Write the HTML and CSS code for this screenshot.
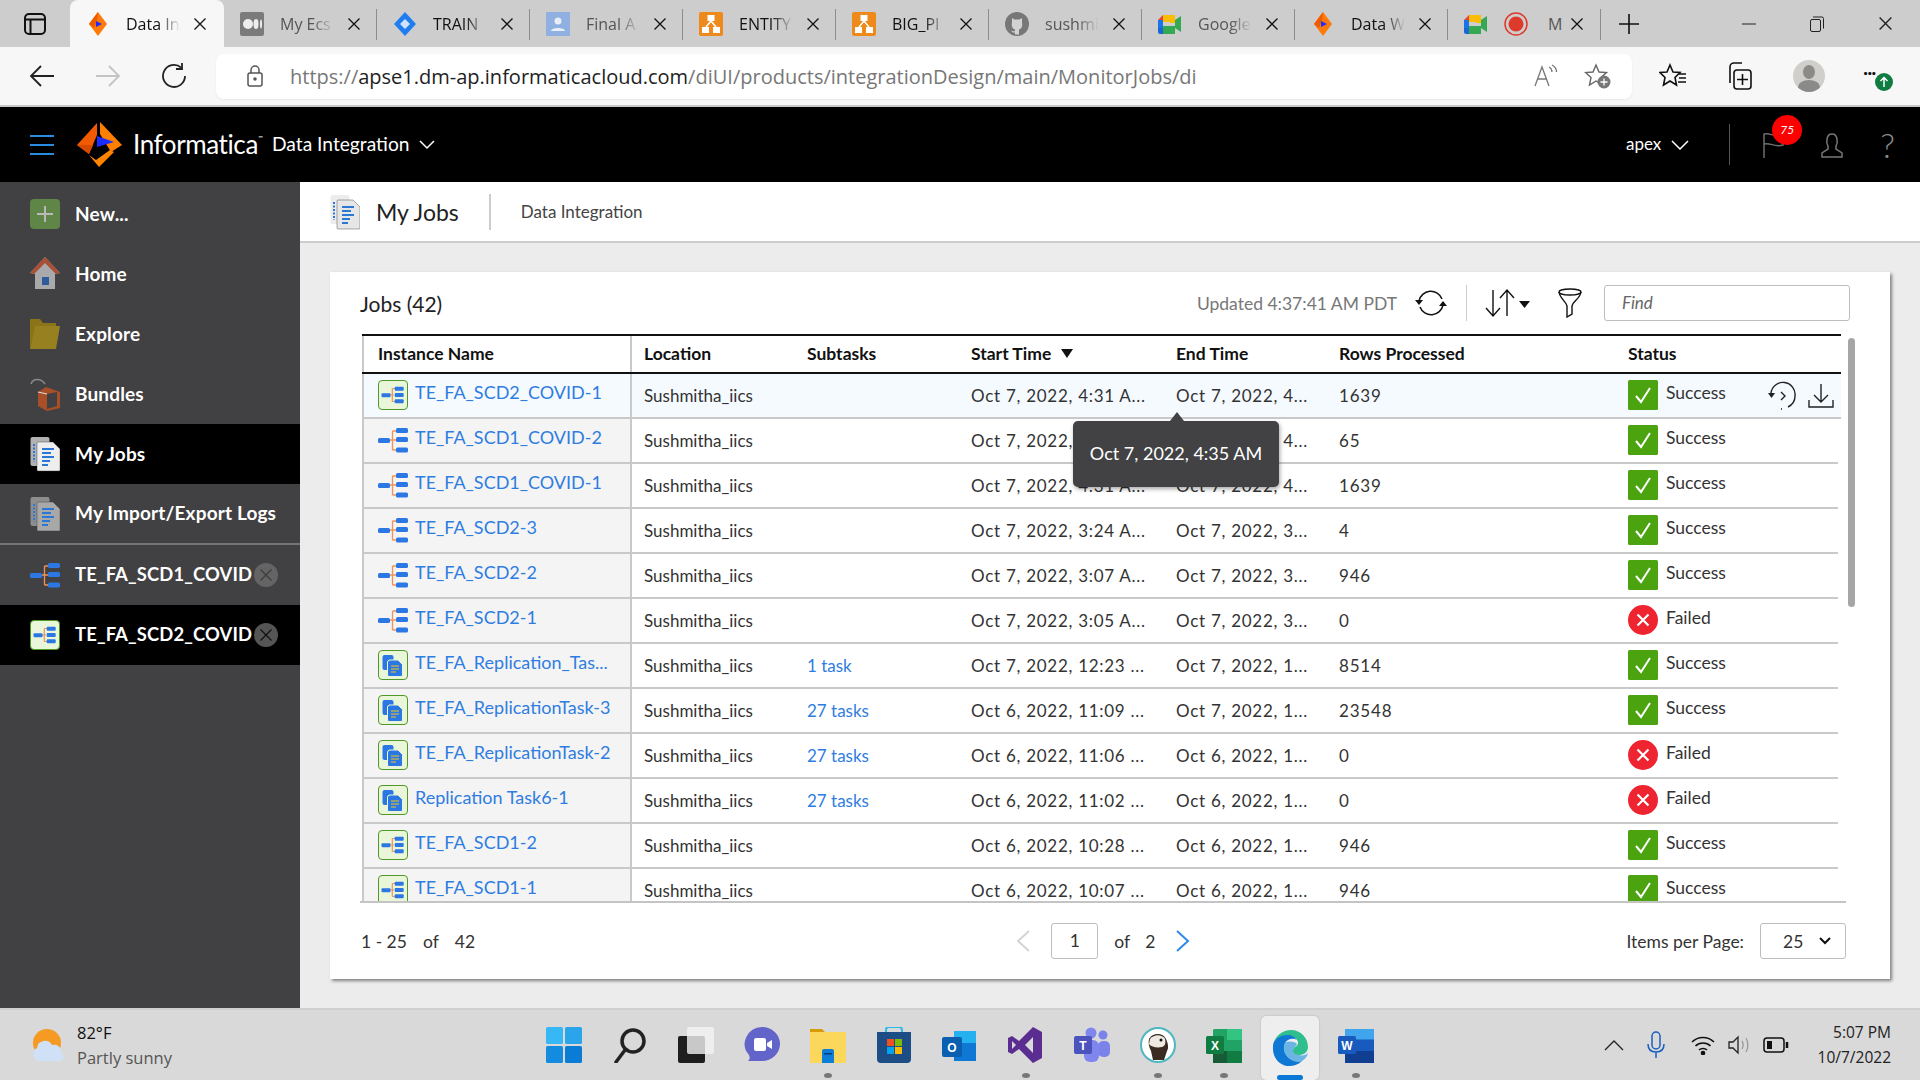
FILE: index.html
```html
<!DOCTYPE html>
<html lang="en">
<head>
    <meta charset="UTF-8">
    <meta name="viewport" content="width=device-width, initial-scale=1.0">
    <title>Data Integration - My Jobs</title>
    <link rel="stylesheet" href="styles.css">
</head>
<body>
    <svg class="defs" width="0" height="0">
        <symbol id="ic-flow" viewBox="0 0 30 30">
            <path d="M12 15h4M14.3 8.5v13M14.3 8.5h3M14.3 21.5h3" stroke="#f0915a" stroke-width="1.2" fill="none"/>
            <rect x="3.5" y="13.2" width="9" height="4" rx="1" fill="#2b78e4"/>
            <rect x="16.7" y="6.7" width="9" height="4" rx="1" fill="#2b78e4"/>
            <rect x="16.7" y="12.9" width="9" height="4" rx="1" fill="#2b78e4"/>
            <rect x="16.7" y="19.3" width="9" height="4" rx="1" fill="#2b78e4"/>
        </symbol>
        <symbol id="ic-flow-big" viewBox="0 0 30 30">
            <path d="M12 15h6M14.5 6v19M14.5 6h4M14.5 25h4" stroke="#f0915a" stroke-width="1.3" fill="none"/>
            <rect x="0" y="13" width="12" height="5" rx="1.5" fill="#2b78e4"/>
            <rect x="18" y="3" width="12" height="5" rx="1.5" fill="#2b78e4"/>
            <rect x="18" y="12" width="12" height="5" rx="1.5" fill="#2b78e4"/>
            <rect x="18" y="22.5" width="12" height="5" rx="1.5" fill="#2b78e4"/>
        </symbol>
        <symbol id="ic-repl" viewBox="0 0 30 30">
            <rect x="4.5" y="5" width="11" height="15" rx="2" fill="#2b78e4"/>
            <path d="M11 10h9l4.5 4.5v10.5a1.5 1.5 0 0 1-1.5 1.5h-12a1.5 1.5 0 0 1-1.5-1.5v-13a1.5 1.5 0 0 1 1.5-1.5z" fill="#2b78e4" stroke="#e8f5d8"/>
            <path d="M13 16h8M13 19h8M13 22h5" stroke="#f5c518" stroke-width="1.2"/>
        </symbol>
        <symbol id="ic-docs" viewBox="0 0 30 36">
            <rect x="0.5" y="1" width="19" height="29" rx="2" fill="currentColor" opacity=".75"/>
            <path d="M8 6h15l7 7v21a1 1 0 0 1-1 1h-21a1 1 0 0 1-1-1v-27a1 1 0 0 1 1-1z" fill="currentColor" stroke="#333" stroke-opacity=".4"/>
            <path d="M12 13h12M12 17h9M12 21h12M12 25h8M12 29h6" stroke="#2b78d4" stroke-width="2"/>
            <path d="M4 8v18" stroke="#2b78d4" stroke-width="2" stroke-dasharray="2 1.5"/>
        </symbol>
        <symbol id="ic-check" viewBox="0 0 30 30">
            <rect width="30" height="30" rx="1.5" fill="#4aa30f"/>
            <path d="M8 16l5 6 9-14" stroke="#fff" stroke-width="2" fill="none"/>
        </symbol>
        <symbol id="ic-fail" viewBox="0 0 30 30">
            <circle cx="15" cy="15" r="15" fill="#ee2430"/>
            <path d="M9.5 9.5l11 11M20.5 9.5l-11 11" stroke="#fff" stroke-width="2.2"/>
        </symbol>
        <symbol id="ic-logo" viewBox="0 0 45 45">
            <path d="M20 1L0 23l12 9 8-19z" fill="#f15a00"/>
            <path d="M0 23l12 9 4-9z" fill="#d84a00"/>
            <path d="M23 0l22 23-11 7-11-18z" fill="#ff7f00"/>
            <path d="M12 33l10 12 15-15-4-2-14 10z" fill="#ff8400"/>
            <path d="M20 14l17 6-17 5z" fill="#1a2cff"/>
        </symbol>
        <symbol id="ic-diamond" viewBox="0 0 24 24">
            <path d="M12 0L3 12l9 12 9-12z" fill="#ff7a0a"/>
            <path d="M12 0L3 12l5 4 3-8z" fill="#ee5a00"/>
            <path d="M10 9l6 3-6 3z" fill="#1a2cff"/>
        </symbol>
        <symbol id="ic-drawio" viewBox="0 0 24 24">
            <rect width="24" height="24" rx="2" fill="#ee8a1c"/>
            <rect x="8.5" y="3" width="7" height="6" fill="#fff"/>
            <rect x="3" y="15" width="7" height="6" fill="#fff"/>
            <rect x="14" y="15" width="7" height="6" fill="#fff"/>
            <path d="M12 9l-5 6M12 9l5 6" stroke="#fff" stroke-width="1.5"/>
        </symbol>
        <symbol id="ic-meet" viewBox="0 0 24 24">
            <path d="M5 3h12v7H5z" fill="#fbbc04"/>
            <path d="M5 3L0 8h5z" fill="#ea4335"/>
            <path d="M0 8h5v8H0z" fill="#1a73e8"/>
            <path d="M0 16h5v6H2a2 2 0 0 1-2-2z" fill="#1967d2"/>
            <path d="M5 14h12v8H5z" fill="#34a853"/>
            <path d="M17 8l6-4v16l-6-4z" fill="#34a853"/>
            <path d="M17 3v8h-5V3z" fill="#fbbc04"/>
        </symbol>
        <symbol id="ic-x" viewBox="0 0 14 14">
            <path d="M1.5 1.5l11 11M12.5 1.5l-11 11" stroke="currentColor" stroke-width="1.3"/>
        </symbol>
    </svg>

    <div class="tabbar">
        <div class="tab-menu">
            <svg width="22" height="24" viewBox="0 0 22 24" fill="none" stroke="#111" stroke-width="2"><rect x="1" y="2" width="20" height="20" rx="4"/><path d="M1 7.5h20M6.5 7.5V22"/></svg>
        </div>
        <div class="tab active">
            <svg class="fav"><use href="#ic-diamond"/></svg>
            <span class="tab-title dark">Data In</span>
            <svg class="tab-x"><use href="#ic-x"/></svg>
        </div>
        <div class="tab">
            <svg class="fav" viewBox="0 0 24 24"><rect width="24" height="24" rx="2" fill="#7b7b7b"/><circle cx="8" cy="12" r="5" fill="#eee"/><ellipse cx="16" cy="12" rx="2.5" ry="5" fill="#eee"/><ellipse cx="21" cy="12" rx="1" ry="4.5" fill="#eee"/></svg>
            <span class="tab-title">My Ecs</span>
            <svg class="tab-x"><use href="#ic-x"/></svg>
        </div>
        <div class="tab">
            <svg class="fav" viewBox="0 0 24 24"><path d="M12 0L1 12l11 12 11-12z" fill="#1f7df0"/><path d="M12 7l-5 5 5 5 5-5z" fill="#cfe3ff"/></svg>
            <span class="tab-title dark">TRAIN</span>
            <svg class="tab-x"><use href="#ic-x"/></svg>
        </div>
        <div class="tab">
            <svg class="fav" viewBox="0 0 24 24"><rect width="24" height="24" rx="1" fill="#8fb0e0"/><circle cx="12" cy="9" r="3.5" fill="#e8eef8"/><path d="M5 19c0-4 14-4 14 0z" fill="#e8eef8"/></svg>
            <span class="tab-title">Final A</span>
            <svg class="tab-x"><use href="#ic-x"/></svg>
        </div>
        <div class="tab">
            <svg class="fav"><use href="#ic-drawio"/></svg>
            <span class="tab-title dark">ENTITY</span>
            <svg class="tab-x"><use href="#ic-x"/></svg>
        </div>
        <div class="tab">
            <svg class="fav"><use href="#ic-drawio"/></svg>
            <span class="tab-title dark">BIG_PI</span>
            <svg class="tab-x"><use href="#ic-x"/></svg>
        </div>
        <div class="tab">
            <svg class="fav" viewBox="0 0 24 24"><circle cx="12" cy="12" r="12" fill="#777"/><path d="M7 6l2.5 1.5h5L17 6v5c1 3-1 6-3 6.5v5h-4v-2c-2 .5-3-.5-4-2 1 .5 2 1 4 .5v-1.5c-2-.5-4-3.5-3-6.5z" fill="#d2d2d2"/></svg>
            <span class="tab-title">sushmi</span>
            <svg class="tab-x"><use href="#ic-x"/></svg>
        </div>
        <div class="tab">
            <svg class="fav"><use href="#ic-meet"/></svg>
            <span class="tab-title">Google</span>
            <svg class="tab-x"><use href="#ic-x"/></svg>
        </div>
        <div class="tab">
            <svg class="fav"><use href="#ic-diamond"/></svg>
            <span class="tab-title dark">Data W</span>
            <svg class="tab-x"><use href="#ic-x"/></svg>
        </div>
        <div class="tab last">
            <svg class="fav"><use href="#ic-meet"/></svg>
            <svg class="fav rec" viewBox="0 0 24 24"><circle cx="12" cy="12" r="11" fill="none" stroke="#dd3a2c" stroke-width="1.5"/><circle cx="12" cy="12" r="7.5" fill="#dd3a2c"/></svg>
            <span class="tab-title short">M</span>
            <svg class="tab-x"><use href="#ic-x"/></svg>
        </div>
        <div class="tab-new">
            <svg width="22" height="22" viewBox="0 0 22 22" stroke="#111" stroke-width="1.6"><path d="M11 1v20M1 11h20"/></svg>
        </div>
        <div class="win-btns">
            <svg width="14" height="14" viewBox="0 0 14 14" stroke="#222"><path d="M0 7h14"/></svg>
            <svg width="16" height="16" viewBox="0 0 16 16" fill="none" stroke="#222"><rect x="1.5" y="3.5" width="10" height="12" rx="1.5"/><path d="M4 1h9a1.5 1.5 0 0 1 1.5 1.5v10"/></svg>
            <svg width="15" height="15" class="win-x"><use href="#ic-x"/></svg>
        </div>
    </div>

    <div class="toolbar">
        <div class="nav-btns">
            <svg width="26" height="24" viewBox="0 0 26 24" fill="none" stroke="#222" stroke-width="1.8"><path d="M25 12H2M12 2L2 12l10 10"/></svg>
            <svg width="26" height="24" viewBox="0 0 26 24" fill="none" stroke="#c4c4c4" stroke-width="1.8"><path d="M1 12h23M14 2l10 10-10 10"/></svg>
            <svg width="26" height="26" viewBox="0 0 26 26" fill="none" stroke="#222" stroke-width="1.8"><path d="M20 4.5A11 11 0 1 0 24 13M21 0v6h-6"/></svg>
        </div>
        <div class="urlbar">
            <svg class="lock" width="16" height="22" viewBox="0 0 16 22" fill="none" stroke="#555" stroke-width="1.5"><rect x="1" y="8" width="14" height="13" rx="2"/><path d="M4 8V5a4 4 0 0 1 8 0v3"/><circle cx="8" cy="14" r="1" fill="#555"/></svg>
            <div class="url"><span class="url-dim">https://</span>apse1.dm-ap.informaticacloud.com<span class="url-dim">/diUI/products/integrationDesign/main/MonitorJobs/di</span></div>
            <svg width="24" height="24" viewBox="0 0 24 24" fill="none" stroke="#777" stroke-width="1.3"><path d="M1 22L8 3l7 19M3.5 15h9M15 3c2 1 3 3 3 5M18 1c3 1.5 4.5 4 4.5 7"/></svg>
            <svg class="star-add" width="28" height="28" viewBox="0 0 28 28" fill="none" stroke="#666" stroke-width="1.4"><path d="M12 3l3 7 7.5.5-5.5 5 1.5 7.5L12 19l-6.5 4L7 15.5l-5.5-5L9 10z"/><circle cx="20" cy="20" r="6.5" fill="#777" stroke="none"/><path d="M20 16.5v7M16.5 20h7" stroke="#fff" stroke-width="1.3"/></svg>
        </div>
        <div class="tool-btns">
            <svg width="28" height="26" viewBox="0 0 28 26" fill="none" stroke="#111" stroke-width="1.6"><path d="M11 2l3 7 7 .5-5 5 1.5 7.5L11 18l-6.5 4L6 14.5l-5-5L8 9zM20 11h7M20 15h7M19 19h8"/></svg>
            <svg width="28" height="30" viewBox="0 0 28 30" fill="none" stroke="#111" stroke-width="1.6"><rect x="9" y="9" width="17" height="19" rx="3"/><path d="M17.5 13v11M12 18.5h11M5 22V6a4 4 0 0 1 4-4h8"/></svg>
            <div class="avatar"><span class="avatar-head"></span><span class="avatar-body"></span></div>
            <div class="more">
                <span class="more-dots">&middot;&middot;&middot;</span>
                <svg width="18" height="18" viewBox="0 0 18 18"><circle cx="9" cy="9" r="9" fill="#107c41"/><path d="M9 14V5M5.5 8L9 4.5 12.5 8" stroke="#fff" stroke-width="1.5" fill="none"/></svg>
            </div>
        </div>
    </div>

    <header class="appbar">
        <div class="hamburger"><span></span><span></span><span></span></div>
        <svg class="logo"><use href="#ic-logo"/></svg>
        <span class="brand">Informatica<sup>™</sup></span>
        <span class="product">Data Integration</span>
        <svg class="chev" width="16" height="10" viewBox="0 0 16 10" fill="none" stroke="#fff" stroke-width="1.5"><path d="M1 1l7 7 7-7"/></svg>
        <div class="appbar-right">
            <span class="org">apex</span>
            <svg class="chev" width="18" height="10" viewBox="0 0 18 10" fill="none" stroke="#fff" stroke-width="1.5"><path d="M1 1l8 8 8-8"/></svg>
            <span class="appbar-div"></span>
            <div class="flag">
                <svg width="22" height="26" viewBox="0 0 22 26" fill="none" stroke="#6d6d6d" stroke-width="1.5"><path d="M2 26V2c6-2 10 4 19 1v10c-8 3-13-3-19-1"/></svg>
                <span class="badge">75</span>
            </div>
            <svg width="22" height="26" viewBox="0 0 22 26" fill="none" stroke="#777" stroke-width="1.5"><path d="M7 14c-2-3-2-12 4-12s6 9 4 12v3l6 4v4H1v-4l6-4z"/></svg>
            <span class="help">?</span>
        </div>
    </header>

    <div class="body-row">
        <nav class="sidebar">
            <a class="nav-item">
                <svg class="nav-ic" viewBox="0 0 30 36"><rect y="3" width="30" height="30" rx="4" fill="#5f8547"/><path d="M15 10v16M7 18h16" stroke="#b9b9b9" stroke-width="2"/></svg>
                <span class="nav-label">New...</span>
            </a>
            <a class="nav-item">
                <svg class="nav-ic" viewBox="0 0 30 36"><path d="M15 1L0 17l5 1v15h20V18l5-1z" fill="#a9a9ab"/><path d="M15 1L0 17l4 1L15 7l11 11 4-1z" fill="#a84f35"/><rect x="12" y="21" width="7" height="8" fill="#2f5d9c"/></svg>
                <span class="nav-label">Home</span>
            </a>
            <a class="nav-item">
                <svg class="nav-ic" viewBox="0 0 30 36"><path d="M0 33V4a1 1 0 0 1 1-1h9l3 4h13v5H6z" fill="#8a7318"/><path d="M0 33L5 10h25l-4 23z" fill="#96801f"/></svg>
                <span class="nav-label">Explore</span>
            </a>
            <a class="nav-item">
                <svg class="nav-ic" viewBox="0 0 30 36"><path d="M1 8c2-6 10-6 14 0" fill="none" stroke="#8a8a8a" stroke-width="1.5"/><path d="M8 16l8-5 14 5v16l-13 3-9-5z" fill="#a84f28"/><path d="M17 18l10-2v14l-10 3z" fill="#414042"/><path d="M8 16l9 2" stroke="#ddd"/></svg>
                <span class="nav-label">Bundles</span>
            </a>
            <a class="nav-item current">
                <svg class="nav-ic doc-light"><use href="#ic-docs"/></svg>
                <span class="nav-label">My Jobs</span>
            </a>
            <a class="nav-item sep">
                <svg class="nav-ic doc-muted"><use href="#ic-docs"/></svg>
                <span class="nav-label">My Import/Export Logs</span>
            </a>
            <a class="nav-item">
                <svg class="nav-ic"><use href="#ic-flow-big"/></svg>
                <span class="nav-label open-label">TE_FA_SCD1_COVID</span>
                <span class="nav-close dim"><svg width="14" height="14"><use href="#ic-x"/></svg></span>
            </a>
            <a class="nav-item current">
                <span class="flow-box side"><svg width="30" height="30"><use href="#ic-flow"/></svg></span>
                <span class="nav-label open-label">TE_FA_SCD2_COVID</span>
                <span class="nav-close"><svg width="14" height="14"><use href="#ic-x"/></svg></span>
            </a>
        </nav>

        <main class="content">
            <div class="page-head">
                <svg class="page-ic doc-page"><use href="#ic-docs"/></svg>
                <span class="page-title">My Jobs</span>
                <span class="page-div"></span>
                <span class="page-sub">Data Integration</span>
            </div>

            <section class="card">
                <div class="card-top">
                    <span class="card-title">Jobs (42)</span>
                    <span class="updated">Updated 4:37:41 AM PDT</span>
                    <svg class="refresh" width="32" height="26" viewBox="0 0 32 26" fill="none" stroke="#111" stroke-width="1.5"><path d="M4 11a12 12 0 0 1 23-2M28 15a12 12 0 0 1-23 2"/><path d="M0 10h8l-4 5zM24 16h8l-4-5z" fill="#111" stroke="none"/></svg>
                    <span class="top-div"></span>
                    <svg class="sort" width="46" height="30" viewBox="0 0 46 30" fill="none" stroke="#111" stroke-width="1.4"><path d="M8 2v26M1 20l7 8 7-8M22 28V2M15 10l7-8 7 8"/><path d="M34 13h11l-5.5 7z" fill="#111" stroke="none"/></svg>
                    <svg class="funnel" width="24" height="30" viewBox="0 0 24 30" fill="none" stroke="#111" stroke-width="1.4"><ellipse cx="12" cy="4" rx="11" ry="3"/><path d="M1 4c1 7 7 9 8 14v11l5-3v-8c1-5 8-7 9-14"/></svg>
                    <div class="find">Find</div>
                </div>

                <div class="grid-wrap">
                    <div class="grid-scroll">
                        <div class="grid-row grid-head">
                            <div class="cell name-head">Instance Name</div>
                            <div class="cell">Location</div>
                            <div class="cell">Subtasks</div>
                            <div class="cell">Start Time <span class="sort-down"></span></div>
                            <div class="cell">End Time</div>
                            <div class="cell">Rows Processed</div>
                            <div class="cell">Status</div>
                        </div>

                        <div class="grid-row hover">
                            <div class="cell name"><span class="flow-box"><svg width="30" height="30"><use href="#ic-flow"/></svg></span><a>TE_FA_SCD2_COVID-1</a></div>
                            <div class="cell">Sushmitha_iics</div>
                            <div class="cell"></div>
                            <div class="cell">Oct 7, 2022, 4:31 A...</div>
                            <div class="cell">Oct 7, 2022, 4...</div>
                            <div class="cell">1639</div>
                            <div class="cell status">
                                <svg class="st"><use href="#ic-check"/></svg><span>Success</span>
                                <div class="row-actions">
                                    <svg width="30" height="30" viewBox="0 0 30 30" fill="none" stroke="#222" stroke-width="1.4"><path d="M3 12A12 12 0 0 1 27 15c0 5-3 9-7 11M14 28h-1"/><path d="M0 12h7l-3.5 5z" fill="#222" stroke="none"/><path d="M13 11l4 4-4 4"/></svg>
                                    <svg width="26" height="26" viewBox="0 0 26 26" fill="none" stroke="#222" stroke-width="1.4"><path d="M13 1v18M6 12l7 7 7-7M1 17v7h24v-7"/></svg>
                                </div>
                            </div>
                        </div>
                        <div class="grid-row">
                            <div class="cell name"><svg class="flow-plain"><use href="#ic-flow-big"/></svg><a>TE_FA_SCD1_COVID-2</a></div>
                            <div class="cell">Sushmitha_iics</div>
                            <div class="cell"></div>
                            <div class="cell">Oct 7, 2022, 4:35 A...</div>
                            <div class="cell">Oct 7, 2022, 4...</div>
                            <div class="cell">65</div>
                            <div class="cell status"><svg class="st"><use href="#ic-check"/></svg><span>Success</span></div>
                        </div>
                        <div class="grid-row">
                            <div class="cell name"><svg class="flow-plain"><use href="#ic-flow-big"/></svg><a>TE_FA_SCD1_COVID-1</a></div>
                            <div class="cell">Sushmitha_iics</div>
                            <div class="cell"></div>
                            <div class="cell">Oct 7, 2022, 4:31 A...</div>
                            <div class="cell">Oct 7, 2022, 4...</div>
                            <div class="cell">1639</div>
                            <div class="cell status"><svg class="st"><use href="#ic-check"/></svg><span>Success</span></div>
                        </div>
                        <div class="grid-row">
                            <div class="cell name"><svg class="flow-plain"><use href="#ic-flow-big"/></svg><a>TE_FA_SCD2-3</a></div>
                            <div class="cell">Sushmitha_iics</div>
                            <div class="cell"></div>
                            <div class="cell">Oct 7, 2022, 3:24 A...</div>
                            <div class="cell">Oct 7, 2022, 3...</div>
                            <div class="cell">4</div>
                            <div class="cell status"><svg class="st"><use href="#ic-check"/></svg><span>Success</span></div>
                        </div>
                        <div class="grid-row">
                            <div class="cell name"><svg class="flow-plain"><use href="#ic-flow-big"/></svg><a>TE_FA_SCD2-2</a></div>
                            <div class="cell">Sushmitha_iics</div>
                            <div class="cell"></div>
                            <div class="cell">Oct 7, 2022, 3:07 A...</div>
                            <div class="cell">Oct 7, 2022, 3...</div>
                            <div class="cell">946</div>
                            <div class="cell status"><svg class="st"><use href="#ic-check"/></svg><span>Success</span></div>
                        </div>
                        <div class="grid-row">
                            <div class="cell name"><svg class="flow-plain"><use href="#ic-flow-big"/></svg><a>TE_FA_SCD2-1</a></div>
                            <div class="cell">Sushmitha_iics</div>
                            <div class="cell"></div>
                            <div class="cell">Oct 7, 2022, 3:05 A...</div>
                            <div class="cell">Oct 7, 2022, 3...</div>
                            <div class="cell">0</div>
                            <div class="cell status"><svg class="st"><use href="#ic-fail"/></svg><span>Failed</span></div>
                        </div>
                        <div class="grid-row">
                            <div class="cell name"><span class="flow-box"><svg width="30" height="30"><use href="#ic-repl"/></svg></span><a>TE_FA_Replication_Tas...</a></div>
                            <div class="cell">Sushmitha_iics</div>
                            <div class="cell"><a>1 task</a></div>
                            <div class="cell">Oct 7, 2022, 12:23 ...</div>
                            <div class="cell">Oct 7, 2022, 1...</div>
                            <div class="cell">8514</div>
                            <div class="cell status"><svg class="st"><use href="#ic-check"/></svg><span>Success</span></div>
                        </div>
                        <div class="grid-row">
                            <div class="cell name"><span class="flow-box"><svg width="30" height="30"><use href="#ic-repl"/></svg></span><a>TE_FA_ReplicationTask-3</a></div>
                            <div class="cell">Sushmitha_iics</div>
                            <div class="cell"><a>27 tasks</a></div>
                            <div class="cell">Oct 6, 2022, 11:09 ...</div>
                            <div class="cell">Oct 7, 2022, 1...</div>
                            <div class="cell">23548</div>
                            <div class="cell status"><svg class="st"><use href="#ic-check"/></svg><span>Success</span></div>
                        </div>
                        <div class="grid-row">
                            <div class="cell name"><span class="flow-box"><svg width="30" height="30"><use href="#ic-repl"/></svg></span><a>TE_FA_ReplicationTask-2</a></div>
                            <div class="cell">Sushmitha_iics</div>
                            <div class="cell"><a>27 tasks</a></div>
                            <div class="cell">Oct 6, 2022, 11:06 ...</div>
                            <div class="cell">Oct 6, 2022, 1...</div>
                            <div class="cell">0</div>
                            <div class="cell status"><svg class="st"><use href="#ic-fail"/></svg><span>Failed</span></div>
                        </div>
                        <div class="grid-row">
                            <div class="cell name"><span class="flow-box"><svg width="30" height="30"><use href="#ic-repl"/></svg></span><a>Replication Task6-1</a></div>
                            <div class="cell">Sushmitha_iics</div>
                            <div class="cell"><a>27 tasks</a></div>
                            <div class="cell">Oct 6, 2022, 11:02 ...</div>
                            <div class="cell">Oct 6, 2022, 1...</div>
                            <div class="cell">0</div>
                            <div class="cell status"><svg class="st"><use href="#ic-fail"/></svg><span>Failed</span></div>
                        </div>
                        <div class="grid-row">
                            <div class="cell name"><span class="flow-box"><svg width="30" height="30"><use href="#ic-flow"/></svg></span><a>TE_FA_SCD1-2</a></div>
                            <div class="cell">Sushmitha_iics</div>
                            <div class="cell"></div>
                            <div class="cell">Oct 6, 2022, 10:28 ...</div>
                            <div class="cell">Oct 6, 2022, 1...</div>
                            <div class="cell">946</div>
                            <div class="cell status"><svg class="st"><use href="#ic-check"/></svg><span>Success</span></div>
                        </div>
                        <div class="grid-row">
                            <div class="cell name"><span class="flow-box"><svg width="30" height="30"><use href="#ic-flow"/></svg></span><a>TE_FA_SCD1-1</a></div>
                            <div class="cell">Sushmitha_iics</div>
                            <div class="cell"></div>
                            <div class="cell">Oct 6, 2022, 10:07 ...</div>
                            <div class="cell">Oct 6, 2022, 1...</div>
                            <div class="cell">946</div>
                            <div class="cell status"><svg class="st"><use href="#ic-check"/></svg><span>Success</span></div>
                        </div>
                    </div>

                    <div class="scrollbar"></div>
                    <div class="tooltip">Oct 7, 2022, 4:35 AM</div>
                </div>

                <div class="card-foot">
                    <div class="range"><span>1 - 25</span><span>of</span><span>42</span></div>
                    <div class="pager">
                        <svg width="16" height="24" viewBox="0 0 16 24" fill="none" stroke="#d4d4d4" stroke-width="2"><path d="M14 2L3 12l11 10"/></svg>
                        <div class="page-input">1</div>
                        <span>of</span>
                        <span>2</span>
                        <svg width="16" height="24" viewBox="0 0 16 24" fill="none" stroke="#2e8be8" stroke-width="2"><path d="M2 2l11 10L2 22"/></svg>
                    </div>
                    <div class="per-page">
                        <span>Items per Page:</span>
                        <div class="page-size">25
                            <svg width="12" height="8" viewBox="0 0 12 8" fill="none" stroke="#111" stroke-width="2"><path d="M1 1l5 5 5-5"/></svg>
                        </div>
                    </div>
                </div>
            </section>
        </main>
    </div>

    <footer class="taskbar">
        <div class="weather">
            <svg width="36" height="36" viewBox="0 0 36 36"><circle cx="17" cy="16" r="14" fill="#f59a23"/><path d="M9 34a7 7 0 0 1-2-13 8 8 0 0 1 15-3 7 7 0 0 1 9 8 4.5 4.5 0 0 1 0 8z" fill="#cfe0f7"/></svg>
            <div class="weather-text"><span class="temp">82°F</span><span class="cond">Partly sunny</span></div>
        </div>
        <div class="task-icons">
            <div class="task-ic">
                <svg width="36" height="36" viewBox="0 0 36 36"><rect width="17" height="17" rx="1.5" fill="#35b8f5"/><rect x="19" width="17" height="17" rx="1.5" fill="#2aa5ec"/><rect y="19" width="17" height="17" rx="1.5" fill="#138ce0"/><rect x="19" y="19" width="17" height="17" rx="1.5" fill="#0a7cd6"/></svg>
            </div>
            <div class="task-ic">
                <svg width="36" height="36" viewBox="0 0 36 36" fill="none" stroke="#222" stroke-width="3.5"><circle cx="21" cy="14" r="11"/><path d="M13 23L4 35" stroke-linecap="round"/></svg>
            </div>
            <div class="task-ic">
                <svg width="36" height="36" viewBox="0 0 36 36"><rect y="9" width="27" height="27" rx="2" fill="#1e1e1e"/><rect x="9" width="27" height="27" rx="2" fill="#f2f2f2" opacity=".8"/></svg>
            </div>
            <div class="task-ic">
                <svg width="36" height="36" viewBox="0 0 36 36"><path d="M18 0a18 17 0 0 1 0 34H4c2-2 2-4 1-6A18 17 0 0 1 18 0z" fill="#6264c9"/><rect x="10" y="11" width="12" height="13" rx="2" fill="#fff"/><path d="M23 16l5-3v9l-5-3z" fill="#fff"/></svg>
            </div>
            <div class="task-ic dot">
                <svg width="36" height="36" viewBox="0 0 36 36"><path d="M0 2h12l3 3h21v8H0z" fill="#d79b08"/><rect y="5" width="36" height="31" fill="#fbd75b"/><path d="M12 24a2 2 0 0 1 2-2h8a2 2 0 0 1 2 2v12H12z" fill="#0c7ed8"/><rect x="14" y="26" width="8" height="1.5" fill="#063d7a"/></svg>
            </div>
            <div class="task-ic">
                <svg width="36" height="36" viewBox="0 0 36 36"><path d="M10 6V3a3 3 0 0 1 3-3h10a3 3 0 0 1 3 3v3" fill="none" stroke="#2ebae8" stroke-width="2"/><path d="M1 5h34v27a4 4 0 0 1-4 4H5a4 4 0 0 1-4-4z" fill="#1c4d85"/><rect x="11" y="12" width="7" height="7" fill="#f25022"/><rect x="19" y="12" width="7" height="7" fill="#7fba00"/><rect x="11" y="20" width="7" height="7" fill="#00a4ef"/><rect x="19" y="20" width="7" height="7" fill="#ffb900"/></svg>
            </div>
            <div class="task-ic">
                <svg width="36" height="36" viewBox="0 0 36 36"><path d="M12 4h22v12H12z" fill="#25b0ef"/><path d="M12 16h22v18H12z" fill="#0f78d4"/><rect y="10" width="20" height="20" rx="2" fill="#0a5fb0"/><text x="10" y="25" class="ic-letter" text-anchor="middle">O</text></svg>
            </div>
            <div class="task-ic dot">
                <svg width="36" height="36" viewBox="0 0 36 36"><path d="M25 0l9 5v26l-9 5-14-14-7 5-4-2V11l4-2 7 5zM25 10l-8 8 8 8zM4 14v8l4-4z" fill="#5c2d91" fill-rule="evenodd"/></svg>
            </div>
            <div class="task-ic">
                <svg width="36" height="36" viewBox="0 0 36 36"><circle cx="29" cy="8" r="4.5" fill="#7b83eb"/><rect x="24" y="14" width="12" height="16" rx="5" fill="#7b83eb"/><circle cx="17" cy="6" r="5.5" fill="#7f87ee"/><rect x="10" y="13" width="15" height="22" rx="6" fill="#7f87ee"/><rect y="9" width="18" height="18" rx="2" fill="#4b53bc"/><text x="9" y="23" class="ic-letter" text-anchor="middle">T</text></svg>
            </div>
            <div class="task-ic dot">
                <svg width="36" height="36" viewBox="0 0 36 36"><circle cx="18" cy="18" r="17" fill="#fff" stroke="#4fb7c0" stroke-width="2"/><path d="M9 12c3-6 14-7 17 0 2 4 3 9 1 12l-3 9H13l-2-9c-2-4-3-8-2-12z" fill="#3a2a22"/><path d="M10 12c4-5 12-5 15 0 1 4 0 7-3 8-5 1-11 0-13-3z" fill="#efe9e2"/><circle cx="21" cy="13" r="1.5" fill="#111"/></svg>
            </div>
            <div class="task-ic dot">
                <svg width="36" height="36" viewBox="0 0 36 36"><rect x="7" y="2" width="29" height="34" rx="1.5" fill="#21a366"/><rect x="21" y="2" width="15" height="11" fill="#33c481"/><rect x="21" y="24" width="15" height="12" fill="#107c41"/><rect x="7" y="24" width="14" height="12" fill="#185c37"/><rect y="9" width="18" height="18" rx="1.5" fill="#107c41"/><text x="9" y="23" class="ic-letter" text-anchor="middle">X</text></svg>
            </div>
            <div class="task-ic running">
                <svg width="38" height="38" viewBox="0 0 38 38"><path d="M2 17C4 6 12 1 20 1c10 0 17 8 17 17 0 5-4 8-9 8-3 0-6-1-6-4 0-5 5-4 5-8 0-4-4-7-9-7-8 0-16 4-16 10z" fill="#2fbf8f"/><path d="M2 17c0-7 8-11 14-11 5 0 8 2 10 5-3-2-9-2-12 3-3 6 0 15 9 18 3 1 6 1 8 0-4 4-9 5-13 5C9 37 1 29 2 17z" fill="#0f78d4"/><path d="M14 14c-3 6 0 15 9 18 3 1 6 1 8 0 3-2 5-4 6-8-2 2-5 3-9 2-3 0-6-1-6-4 0-4 3-4 4-7-3-3-9-3-12-1z" fill="#1490df" opacity=".6"/></svg>
            </div>
            <div class="task-ic dot">
                <svg width="36" height="36" viewBox="0 0 36 36"><rect x="7" y="2" width="29" height="34" rx="1.5" fill="#2b7cd3"/><rect x="7" y="2" width="29" height="10" fill="#41a5ee"/><rect x="7" y="24" width="29" height="12" fill="#103f91"/><rect x="7" y="13" width="29" height="11" fill="#185abd"/><rect y="9" width="18" height="18" rx="1.5" fill="#185abd"/><text x="9" y="23" class="ic-letter" text-anchor="middle">W</text></svg>
            </div>
        </div>
        <div class="tray">
            <svg width="20" height="12" viewBox="0 0 20 12" fill="none" stroke="#222" stroke-width="1.3"><path d="M1 11l9-9 9 9"/></svg>
            <svg class="mic" width="18" height="28" viewBox="0 0 18 28" fill="none" stroke="#1a5fc0" stroke-width="1.5"><rect x="5" y="1" width="8" height="17" rx="4"/><path d="M1 13c0 5 3 8 8 8s8-3 8-8M9 21v6"/></svg>
            <svg class="wifi" width="24" height="20" viewBox="0 0 24 20" fill="none" stroke="#111" stroke-width="1.6"><path d="M1 7c6-6 16-6 22 0M4.5 11c4-4 11-4 15 0M8 15c2-2 6-2 8 0"/><circle cx="12" cy="18" r="1.5" fill="#111"/></svg>
            <svg class="vol" width="24" height="20" viewBox="0 0 24 20" fill="none" stroke="#222" stroke-width="1.3"><path d="M2 7h4l5-5v16l-5-5H2z"/><path d="M15 6c1.5 2 1.5 6 0 8M19 3c2.5 4 2.5 10 0 14" stroke="#999"/></svg>
            <svg class="batt" width="26" height="16" viewBox="0 0 26 16" fill="none" stroke="#111" stroke-width="1.5"><rect x="1" y="1" width="20" height="14" rx="3"/><rect x="4" y="4" width="5" height="8" fill="#111" stroke="none"/><path d="M24 5v6" stroke-width="2.5"/></svg>
            <div class="clock"><span>5:07 PM</span><span>10/7/2022</span></div>
        </div>
    </footer>
</body>
</html>
```

FILE: styles.css
```css
* {
    margin: 0;
    padding: 0;
    box-sizing: border-box;
}

html, body {
    width: 1920px;
    height: 1080px;
    overflow: hidden;
}

body {
    display: flex;
    flex-direction: column;
    font-family: "Lato", "Liberation Sans", sans-serif;
    color: #222;
    background: #ececec;
}

.defs {
    position: absolute;
}

/* browser chrome */
.tabbar {
    height: 47px;
    background: #cdcdcd;
    display: flex;
    align-items: stretch;
    font-family: "Open Sans", "Liberation Sans", sans-serif;
    font-size: 16px;
    flex-shrink: 0;
}

.tab-menu {
    width: 70px;
    display: flex;
    align-items: center;
    justify-content: center;
}

.tab {
    width: 153px;
    display: flex;
    align-items: center;
    padding-left: 16px;
    position: relative;
    border-right: 1px solid #8d8d8d;
    border-image: linear-gradient(transparent 10px, #8d8d8d 10px, #8d8d8d 39px, transparent 39px) 1;
}

.tab.active {
    width: 154px;
    background: #f7f7f7;
    border: none;
    border-radius: 8px 8px 0 0;
}

.fav {
    width: 24px;
    height: 24px;
    flex-shrink: 0;
}

.rec {
    margin-left: 16px;
}

.tab-title {
    margin-left: 16px;
    width: 54px;
    white-space: nowrap;
    overflow: hidden;
    color: #555;
    -webkit-mask-image: linear-gradient(90deg, #000 60%, transparent 100%);
    mask-image: linear-gradient(90deg, #000 60%, transparent 100%);
}

.tab-title.dark {
    color: #111;
}

.tab-title.short {
    width: 16px;
    -webkit-mask-image: none;
    mask-image: none;
    margin-left: 20px;
}

.tab-x {
    width: 14px;
    height: 14px;
    color: #111;
    margin-left: 13px;
}

.last .tab-x {
    margin-left: 6px;
}

.tab-new {
    width: 56px;
    display: flex;
    align-items: center;
    justify-content: center;
}

.win-btns {
    flex: 1;
    display: flex;
    align-items: center;
    justify-content: flex-end;
    gap: 53px;
    padding-right: 27px;
}

.win-x {
    color: #222;
}

.toolbar {
    height: 60px;
    background: #f7f7f7;
    border-bottom: 2px solid #c8c8c8;
    display: flex;
    align-items: center;
    font-family: "Open Sans", "Liberation Sans", sans-serif;
    flex-shrink: 0;
}

.nav-btns {
    width: 216px;
    display: flex;
    align-items: center;
    gap: 40px;
    padding-left: 29px;
}

.urlbar {
    width: 1416px;
    height: 45px;
    background: #fff;
    border-radius: 8px;
    box-shadow: 0 1px 2px rgba(0, 0, 0, 0.06);
    display: flex;
    align-items: center;
    padding: 0 20px 0 31px;
}

.lock {
    margin-right: 27px;
}

.url {
    flex: 1;
    font-size: 20px;
    color: #222;
    white-space: nowrap;
}

.url-dim {
    color: #777;
}

.star-add {
    margin-left: 26px;
}

.tool-btns {
    flex: 1;
    display: flex;
    align-items: center;
    padding-left: 27px;
    gap: 38px;
}

.avatar {
    width: 32px;
    height: 32px;
    border-radius: 50%;
    background: #d0cfcb;
    position: relative;
    overflow: hidden;
    flex-shrink: 0;
    margin-left: 2px;
}

.avatar-head {
    position: absolute;
    left: 10px;
    top: 5px;
    width: 12px;
    height: 14px;
    border-radius: 50%;
    background: #8a8a88;
}

.avatar-body {
    position: absolute;
    left: 5px;
    top: 20px;
    width: 22px;
    height: 14px;
    border-radius: 50%;
    background: #8a8a88;
}

.more {
    position: relative;
    width: 26px;
    height: 26px;
}

.more-dots {
    font-size: 18px;
    font-weight: 700;
    color: #111;
    line-height: 20px;
    letter-spacing: -1px;
}

.more svg {
    position: absolute;
    right: -4px;
    bottom: -2px;
}

/* app header */
.appbar {
    height: 75px;
    background: #000;
    display: flex;
    align-items: center;
    color: #fff;
    padding-left: 30px;
    flex-shrink: 0;
}

.hamburger {
    width: 24px;
    display: flex;
    flex-direction: column;
    gap: 7px;
    margin-right: 23px;
}

.hamburger span {
    height: 2px;
    background: #2a8ce0;
}

.logo {
    width: 45px;
    height: 45px;
    margin-right: 11px;
}

.brand {
    font-size: 26px;
    font-weight: 400;
    margin-right: 11px;
    width: 128px;
    white-space: nowrap;
    padding-bottom: 1px;
    letter-spacing: -0.4px;
}

.brand sup {
    font-size: 6px;
    vertical-align: 14px;
}

.product {
    font-size: 19.2px;
    margin-right: 10px;
    white-space: nowrap;
    padding-bottom: 3px;
}

.appbar-right {
    margin-left: auto;
    display: flex;
    align-items: center;
    padding-right: 25px;
}

.org {
    font-size: 17px;
    margin-right: 10px;
    padding-bottom: 2px;
}

.appbar-div {
    width: 1px;
    height: 41px;
    background: #555;
    margin: 0 32px 0 40px;
}

.flag {
    position: relative;
    width: 22px;
    height: 26px;
    margin-right: 37px;
}

.badge {
    position: absolute;
    left: 10px;
    top: -17px;
    width: 30px;
    height: 30px;
    border-radius: 50%;
    background: #fe0000;
    font-size: 12px;
    font-style: italic;
    display: flex;
    align-items: center;
    justify-content: center;
}

.help {
    font-size: 34px;
    font-weight: 300;
    color: #8a8a8a;
    margin-left: 37px;
}

/* page body */
.body-row {
    flex: 1;
    display: flex;
    min-height: 0;
}

.sidebar {
    width: 300px;
    background: #414042;
    padding-top: 2px;
    flex-shrink: 0;
}

.nav-item {
    height: 60px;
    display: flex;
    align-items: center;
    padding: 0 22px 0 30px;
    color: #fff;
    font-size: 19px;
    font-weight: 700;
    position: relative;
}

.nav-item.current {
    background: #000;
}

.nav-item.sep {
    border-bottom: 2px solid #757575;
    height: 61px;
}

.nav-ic {
    width: 30px;
    height: 36px;
    flex-shrink: 0;
}

.doc-light {
    color: #eee;
}

.doc-muted {
    color: #a8a8a8;
}

.doc-page {
    color: #e6e6e6;
}

.nav-label {
    margin-left: 15px;
    white-space: nowrap;
    padding-bottom: 2px;
    letter-spacing: 0.15px;
}

.open-label {
    font-size: 18.4px;
}

.nav-close {
    width: 24px;
    height: 24px;
    border-radius: 50%;
    background: #555;
    color: #111;
    display: flex;
    align-items: center;
    justify-content: center;
    margin-left: auto;
    flex-shrink: 0;
}

.nav-close.dim {
    background: #646464;
    color: #3c3c3c;
}

.flow-box {
    width: 30px;
    height: 30px;
    border: 1.5px solid #4f9a26;
    border-radius: 4px;
    background: #e9f6da;
    display: inline-flex;
    align-items: center;
    justify-content: center;
    flex-shrink: 0;
}

.flow-box svg {
    flex-shrink: 0;
}

.content {
    flex: 1;
    min-width: 0;
}

.page-head {
    height: 61px;
    background: #fff;
    border-bottom: 2px solid #ccc;
    display: flex;
    align-items: center;
    padding-left: 30px;
}

.page-ic {
    width: 30px;
    height: 36px;
}

.page-title {
    font-size: 23px;
    margin-left: 16px;
    color: #222;
}

.page-div {
    width: 2px;
    height: 36px;
    background: #ccc;
    margin: 0 30px 0 30px;
}

.page-sub {
    font-size: 17px;
    color: #444;
}

.card {
    margin: 29px 30px 0;
    height: 707px;
    background: #fff;
    box-shadow: 2px 2px 3px rgba(0, 0, 0, 0.45);
    padding: 0 30px;
}

.card-top {
    height: 62px;
    display: flex;
    align-items: center;
    padding-right: 11px;
}

.card-title {
    font-size: 21px;
    margin-right: auto;
}

.updated {
    font-size: 17.5px;
    color: #777;
    margin-right: 18px;
}

.top-div {
    width: 1px;
    height: 36px;
    background: #ccc;
    margin: 0 18px 0 19px;
}

.sort {
    margin-right: 27px;
}

.find {
    width: 246px;
    height: 36px;
    border: 1px solid #bdbdbd;
    border-radius: 3px;
    font-size: 17px;
    font-style: italic;
    color: #666;
    line-height: 34px;
    padding-left: 17px;
    margin: 0 -1px 0 22px;
}

.grid-wrap {
    position: relative;
    height: 569px;
}

.grid-scroll {
    height: 569px;
    width: 1486px;
    padding-left: 2px;
    overflow: hidden;
    border-bottom: 2px solid #c4c4c4;
}

.grid-row {
    display: grid;
    grid-template-columns: 270px 175px 164px 205px 163px 289px 210px;
    height: 45px;
    width: 1476px;
    border-bottom: 2px solid #c9c9c9;
    font-size: 17px;
}

.grid-head {
    width: 1479px;
    height: 40px;
    border-top: 2px solid #111;
    border-bottom: 2px solid #111;
    font-weight: 700;
    font-size: 17.5px;
    color: #111;
    grid-template-columns: 270px 175px 164px 205px 163px 289px 213px;
}

.grid-row.hover {
    width: 1479px;
    background: #f5faff;
    grid-template-columns: 270px 175px 164px 205px 163px 289px 213px;
}

.cell {
    display: flex;
    align-items: center;
    padding-left: 12px;
    white-space: nowrap;
    color: #333;
    min-width: 0;
}

.grid-head .cell {
    color: #111;
    padding-bottom: 2px;
}

.cell:nth-child(3), .cell:nth-child(4), .cell:nth-child(5), .cell:nth-child(6), .cell:nth-child(7) {
    padding-left: 0;
}

.grid-row:not(.grid-head) .cell:nth-child(4), .grid-row:not(.grid-head) .cell:nth-child(5) {
    letter-spacing: 0.72px;
}

.grid-row:not(.grid-head) .cell:nth-child(6) {
    letter-spacing: 0.8px;
}

.grid-row .cell:first-child {
    background: #f4f4f4;
    border-left: 2px solid #c9c9c9;
    border-right: 2px solid #c9c9c9;
    padding-left: 14px;
}

.grid-head .cell:first-child {
    background: #fff;
}

.grid-row.hover .cell:first-child {
    background: #f5faff;
}

.cell a {
    color: #2f7de1;
}

.cell.name a {
    margin-left: 7px;
    padding-bottom: 7px;
    font-size: 18px;
}

.cell.name .flow-box, .flow-plain {
    margin-bottom: 2px;
}

.flow-plain {
    width: 30px;
    height: 30px;
    flex-shrink: 0;
}

.sort-down {
    display: inline-block;
    margin-left: 10px;
    border-left: 6px solid transparent;
    border-right: 6px solid transparent;
    border-top: 9px solid #111;
}

.status {
    position: relative;
    font-size: 17.5px;
}

.st {
    width: 30px;
    height: 30px;
    margin: 0 8px 2px 0;
    flex-shrink: 0;
}

.status span {
    padding-bottom: 7px;
}

.row-actions {
    position: absolute;
    right: 7px;
    top: 7px;
    display: flex;
    align-items: center;
    gap: 10px;
}

.scrollbar {
    position: absolute;
    left: 1488px;
    top: 4px;
    width: 7px;
    height: 269px;
    background: #a6a6a6;
    border-radius: 4px;
}

.tooltip {
    position: absolute;
    left: 713px;
    top: 87px;
    width: 206px;
    height: 66px;
    background: #424244;
    color: #fff;
    border-radius: 5px;
    font-size: 18px;
    padding-bottom: 3px;
    display: flex;
    align-items: center;
    justify-content: center;
    box-shadow: 1px 2px 4px rgba(0, 0, 0, 0.35);
}

.tooltip::before {
    content: "";
    position: absolute;
    left: 97px;
    top: -9px;
    border-left: 7px solid transparent;
    border-right: 7px solid transparent;
    border-bottom: 9px solid #424244;
}

.card-foot {
    height: 76px;
    display: grid;
    grid-template-columns: 1fr 1fr 1fr;
    align-items: center;
    font-size: 17.5px;
    color: #333;
    width: 1486px;
}

.range {
    display: flex;
    gap: 16px;
    margin-left: 1px;
}

.pager {
    display: flex;
    align-items: center;
    margin-left: 160px;
    width: 190px;
}

.page-input {
    width: 47px;
    height: 36px;
    border: 1px solid #bdbdbd;
    border-radius: 3px;
    text-align: center;
    line-height: 34px;
    margin: 0 16px 0 20px;
}

.pager span:last-of-type {
    margin: 0 20px 0 15px;
}

.per-page {
    display: flex;
    align-items: center;
    justify-content: flex-end;
    gap: 16px;
}

.page-size {
    width: 86px;
    height: 36px;
    border: 1px solid #bdbdbd;
    border-radius: 3px;
    display: flex;
    align-items: center;
    justify-content: space-between;
    padding: 0 14px 0 22px;
}

/* windows taskbar */
.taskbar {
    height: 72px;
    background: #d9d9d9;
    border-top: 2px solid #cfcfcf;
    display: grid;
    grid-template-columns: 531px 858px 531px;
    align-items: center;
    font-family: "Open Sans", "Liberation Sans", sans-serif;
    flex-shrink: 0;
}

.weather {
    display: flex;
    align-items: center;
    gap: 11px;
    padding-left: 30px;
}

.weather-text {
    display: flex;
    flex-direction: column;
    font-size: 16.5px;
    line-height: 25px;
}

.temp {
    color: #111;
}

.cond {
    color: #555;
}

.task-icons {
    display: flex;
    height: 100%;
}

.task-ic {
    width: 66px;
    display: flex;
    align-items: center;
    justify-content: center;
    position: relative;
}

.task-ic.dot::after {
    content: "";
    position: absolute;
    left: 29px;
    bottom: 2px;
    width: 8px;
    height: 5px;
    border-radius: 50%;
    background: #777;
}

.task-ic.running {
    background: #eeeeee;
    border-radius: 5px;
    margin: 6px 4px 0;
    width: 58px;
    box-shadow: 0 0 2px rgba(0, 0, 0, 0.2);
}

.task-ic.running::after {
    content: "";
    position: absolute;
    left: 16px;
    bottom: 0;
    width: 26px;
    height: 5px;
    border-radius: 3px;
    background: #0a78d6;
}

.ic-letter {
    font-family: "Liberation Sans", sans-serif;
    font-size: 12px;
    font-weight: 700;
    fill: #fff;
}

.tray {
    display: flex;
    align-items: center;
    padding-left: 215px;
}

.mic {
    margin-left: 23px;
}

.wifi {
    margin-left: 26px;
}

.vol {
    margin-left: 12px;
}

.batt {
    margin-left: 12px;
}

.clock {
    margin-left: auto;
    padding-right: 29px;
    display: flex;
    flex-direction: column;
    align-items: flex-end;
    font-size: 15.5px;
    line-height: 25px;
    color: #222;
}
```
